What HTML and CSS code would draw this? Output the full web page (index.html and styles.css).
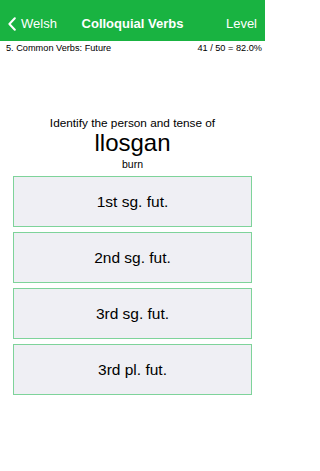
FILE: index.html
```html
<!DOCTYPE html>
<html>
<head>
<meta charset="utf-8">
<link rel="stylesheet" href="styles.css">
</head>
<body>
<div class="page">
  <div class="navbar">
    <div class="nav-left">
      <svg class="chev" width="8" height="14" viewBox="0 0 8 14"><path d="M6.8 1.2 L1.4 7 L6.8 12.8" fill="none" stroke="#fff" stroke-width="2" stroke-linecap="round" stroke-linejoin="round"/></svg>
      <span>Welsh</span>
    </div>
    <div class="nav-title">Colloquial Verbs</div>
    <div class="nav-right">Level</div>
  </div>
  <div class="subbar">
    <span>5. Common Verbs: Future</span>
    <span>41 / 50 = 82.0%</span>
  </div>
  <div class="prompt">
    <div class="question">Identify the person and tense of</div>
    <div class="word">llosgan</div>
    <div class="meaning">burn</div>
  </div>
  <div class="answers">
    <div class="answer">1st sg. fut.</div>
    <div class="answer">2nd sg. fut.</div>
    <div class="answer">3rd sg. fut.</div>
    <div class="answer">3rd pl. fut.</div>
  </div>
</div>
</body>
</html>
```
FILE: styles.css
```css
html, body {
  margin: 0;
  padding: 0;
  background: #ffffff;
  font-family: "Liberation Sans", Arial, sans-serif;
  color: #000;
}
.page {
  width: 265px;
  height: 471px;
  overflow: hidden;
}
.navbar {
  height: 41px;
  background: #19b341;
  color: #fff;
  display: flex;
  align-items: center;
  justify-content: space-between;
  padding: 6px 8px 0 8px;
  box-sizing: border-box;
  position: relative;
}
.nav-left {
  display: flex;
  align-items: center;
  gap: 5px;
  font-size: 13px;
}
.chev { display: block; }
.nav-title {
  position: absolute;
  left: 0;
  right: 0;
  top: 6px;
  bottom: 0;
  display: flex;
  align-items: center;
  justify-content: center;
  font-size: 13px;
  font-weight: bold;
  pointer-events: none;
}
.nav-right {
  font-size: 13px;
}
.subbar {
  display: flex;
  justify-content: space-between;
  font-size: 9.2px;
  padding: 1px 3px 0 6px;
  height: 13px;
  line-height: 13px;
}
.prompt {
  margin-top: 61px;
  text-align: center;
}
.question {
  font-size: 11.8px;
  line-height: 14px;
}
.word {
  font-size: 24px;
  line-height: 24px;
  margin-top: 1px;
}
.meaning {
  font-size: 10.5px;
  line-height: 12px;
  margin-top: 3px;
}
.answers {
  margin: 6px 13px 0 13px;
  display: flex;
  flex-direction: column;
  gap: 5px;
}
.answer {
  height: 51px;
  box-sizing: border-box;
  background: #efeff4;
  border: 1px solid #7ed39a;
  display: flex;
  align-items: center;
  justify-content: center;
  font-size: 15.5px;
}
```
